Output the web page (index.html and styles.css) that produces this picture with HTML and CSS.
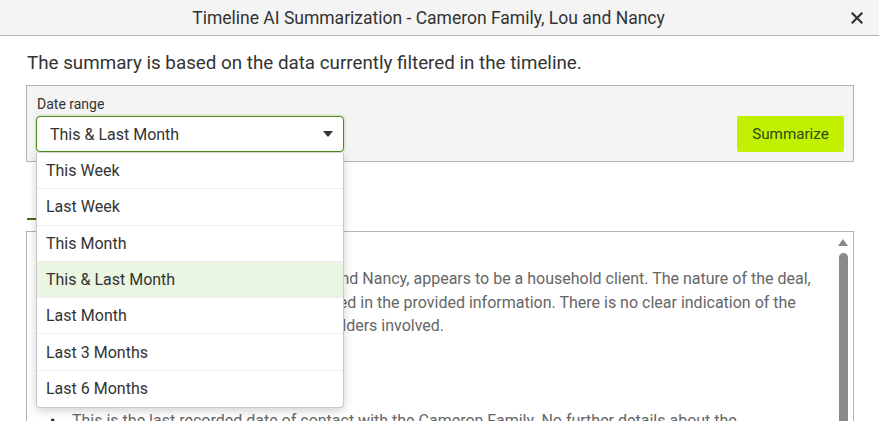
FILE: index.html
```html
<!DOCTYPE html>
<html lang="en">
<head>
<meta charset="utf-8">
<title>Timeline AI Summarization</title>
<link rel="stylesheet" href="styles.css">
</head>
<body>
<div class="dialog">
  <header class="titlebar">
    <h1 class="title">Timeline AI Summarization - Cameron Family, Lou and Nancy</h1>
    <button class="close" aria-label="Close">
      <svg width="12" height="12" viewBox="0 0 12 12"><path d="M1.5 1.5 L10.5 10.5 M10.5 1.5 L1.5 10.5" stroke="#333" stroke-width="2.2" stroke-linecap="square"/></svg>
    </button>
  </header>

  <main class="content">
    <p class="intro">The summary is based on the data currently filtered in the timeline.</p>

    <section class="filter">
      <div class="field">
        <label class="field-label">Date range</label>
        <div class="select-wrap">
          <div class="select">
            <span>This &amp; Last Month</span>
            <svg class="caret" width="10" height="6" viewBox="0 0 10 6"><path d="M0 0 H10 L5 6 Z" fill="#333"/></svg>
          </div>
          <ul class="menu">
            <li>This Week</li>
            <li>Last Week</li>
            <li>This Month</li>
            <li class="selected">This &amp; Last Month</li>
            <li>Last Month</li>
            <li>Last 3 Months</li>
            <li>Last 6 Months</li>
          </ul>
        </div>
      </div>
      <button class="summarize">Summarize</button>
    </section>

    <nav class="tabs">
      <span class="tab active">Summary</span>
    </nav>

    <section class="result">
      <div class="result-text">
        <h2 class="result-heading">Overview</h2>
        <p class="lead">The Cameron Family, including both Lou and Nancy, appears to be a household client. The nature of the deal,<br>
        including its value and stage, is not specified in the provided information. There is no clear indication of the<br>
        anticipated timeline or of its many stakeholders involved.</p>
        <h2 class="result-heading">Key Dates</h2>
        <p class="date">March 12</p>
        <ul class="bullets">
          <li>This is the last recorded date of contact with the Cameron Family. No further details about the conversation are available.</li>
        </ul>
      </div>
      <div class="scrollbar">
        <span class="arrow"></span>
        <span class="thumb"></span>
      </div>
    </section>
  </main>
</div>
</body>
</html>
```

FILE: styles.css
```css
* { box-sizing: border-box; }

html, body {
  margin: 0;
  padding: 0;
  background: #fff;
}

body {
  font-family: Roboto, "Liberation Sans", sans-serif;
  color: #333;
  overflow: hidden;
}

.dialog {
  width: 879px;
  height: 421px;
  overflow: hidden;
}

.titlebar {
  height: 36px;
  background: #f4f4f4;
  border-bottom: 1px solid #b4b4b4;
  display: flex;
  align-items: center;
  justify-content: center;
  padding-right: 22px;
  position: relative;
}

.title {
  margin: 0;
  font-size: 17.5px;
  font-weight: 400;
  color: #333;
}

.close {
  position: absolute;
  right: 15px;
  top: 11px;
  width: 14px;
  height: 14px;
  padding: 0;
  border: 0;
  background: transparent;
  display: flex;
  align-items: center;
  justify-content: center;
}

.content {
  padding: 15px 25px 0 26px;
}

.intro {
  margin: 0 0 10px 1px;
  font-size: 18.8px;
  line-height: 24px;
  color: #333;
}

.filter {
  background: #f4f4f4;
  border: 1px solid #b4b4b4;
  height: 77px;
  padding: 9px;
  display: flex;
  justify-content: space-between;
  align-items: flex-end;
}

.field {
  display: flex;
  flex-direction: column;
  gap: 4px;
}

.field-label {
  font-size: 14px;
  line-height: 16px;
  color: #333;
  padding-left: 1px;
}

.select-wrap {
  position: relative;
  width: 308px;
}

.select {
  height: 36px;
  border: 1px solid #4e8a1e;
  border-radius: 4px;
  background: #fff;
  box-shadow: 0 0 3px rgba(92, 160, 40, 0.55);
  display: flex;
  align-items: center;
  justify-content: space-between;
  padding: 0 10px 0 13px;
  font-size: 16px;
  color: #333;
}

.caret { display: block; }

.menu {
  position: absolute;
  top: 37px;
  left: 0;
  width: 308px;
  margin: 0;
  padding: 0;
  list-style: none;
  background: #fff;
  border: 1px solid #c8c8c8;
  border-top: 0;
  border-radius: 0 0 4px 4px;
  box-shadow: 0 3px 10px rgba(0, 0, 0, 0.18);
  z-index: 5;
}

.menu li {
  height: 36.3px;
  display: flex;
  align-items: center;
  padding-left: 9px;
  font-size: 16px;
  color: #333;
  border-bottom: 1px solid #eeeeee;
}

.menu li:last-child { border-bottom: 0; }

.menu li.selected { background: #eaf6e2; }

.summarize {
  width: 107px;
  height: 36px;
  border: 0;
  border-radius: 2px;
  background: #c1f000;
  color: #2e4a12;
  font-family: Roboto, "Liberation Sans", sans-serif;
  font-size: 15.2px;
  padding: 0;
}

/* tab strip above the result panel */
.tabs {
  height: 58px;
  display: flex;
  align-items: flex-end;
  padding-left: 1px;
}

.tab {
  font-size: 15px;
  color: #3f6f14;
  padding: 0 10px 6px 12px;
  border-bottom: 2px solid #3f6f14;
}

.result {
  margin-top: 11px;
  border: 1px solid #b4b4b4;
  height: 240px;
  display: flex;
}

.result-text {
  flex: 1;
  padding: 3px 4px 0 13px;
  font-size: 16px;
  line-height: 23.5px;
  color: #666;
}

.result-heading {
  margin: 0 0 12px;
  font-size: 16px;
  font-weight: 700;
  color: #555;
  line-height: 20px;
}

.result-text p {
  margin: 0 0 22px;
}

.result-text p.lead {
  text-indent: 4px;
}

.result-text p.date {
  margin: -6px 0 0;
}

.bullets {
  margin: 0;
  padding: 0 0 0 10px;
  list-style: none;
}

.bullets li {
  display: flex;
}

.bullets li::before {
  content: "\2022";
  flex: none;
  width: 22px;
  color: #222;
}

.scrollbar {
  width: 16px;
  display: flex;
  flex-direction: column;
  align-items: center;
  padding-top: 7px;
  margin-right: 2px;
}

.arrow {
  width: 0;
  height: 0;
  border-left: 5px solid transparent;
  border-right: 5px solid transparent;
  border-bottom: 7px solid #8a8a8a;
}

.thumb {
  margin-top: 7px;
  width: 9px;
  flex: 1;
  background: #8a8a8a;
  border-radius: 5px 5px 0 0;
}
```
